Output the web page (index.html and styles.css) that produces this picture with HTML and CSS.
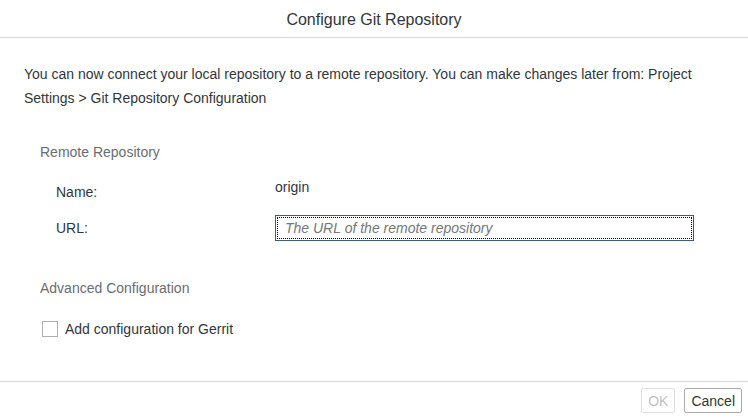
FILE: index.html
```html
<!DOCTYPE html>
<html>
<head>
<meta charset="utf-8">
<link rel="stylesheet" href="styles.css">
</head>
<body>
<div class="dialog">
  <header class="dlg-header">Configure Git Repository</header>
  <main class="dlg-content">
    <p class="intro">You can now connect your local repository to a remote repository. You can make changes later from: Project Settings &gt; Git Repository Configuration</p>
    <section class="group">
      <h2 class="group-title">Remote Repository</h2>
      <div class="form-row">
        <span class="label">Name:</span>
        <span class="value">origin</span>
      </div>
      <div class="form-row">
        <span class="label">URL:</span>
        <div class="input"><span class="placeholder">The URL of the remote repository</span></div>
      </div>
    </section>
    <section class="group adv">
      <h2 class="group-title">Advanced Configuration</h2>
      <label class="check-row"><span class="checkbox"></span><span>Add configuration for Gerrit</span></label>
    </section>
  </main>
  <footer class="dlg-footer">
    <button class="btn disabled">OK</button>
    <button class="btn">Cancel</button>
  </footer>
</div>
</body>
</html>
```
FILE: styles.css
```css
html, body { margin: 0; padding: 0; background: #fff; }
body { font-family: "Liberation Sans", Arial, sans-serif; color: #32363a; font-size: 14px; }
.dialog { width: 748px; height: 417px; display: flex; flex-direction: column; box-sizing: border-box; }
.dlg-header { height: 38px; padding-top: 2px; box-sizing: border-box; border-bottom: 1px solid #d9d9d9; display: flex; align-items: center; justify-content: center; font-size: 16px; color: #32363a; }
.dlg-content { flex: 1; padding: 0 24px; }
.intro { margin: 24px 0 0; line-height: 24px; }
.group { padding-left: 16px; }
.group-title { margin: 32px 0 0; font-size: 14px; font-weight: normal; color: #6a6d70; line-height: 20px; }
.form-row { display: flex; align-items: center; height: 36px; }
.form-row:first-of-type { margin-top: 12px; }
.label { width: 219px; padding-left: 16px; }
.value { margin-top: -10px; }
.input { width: 419px; height: 26px; box-sizing: border-box; border: 1px solid #3f5e7e; padding: 1px; }
.input .placeholder { display: flex; align-items: center; height: 100%; box-sizing: border-box; outline: 1px dotted #000; outline-offset: -1px; padding-left: 8px; font-style: italic; color: #74777a; }
.adv .group-title { margin-top: 32px; }
.check-row { display: flex; align-items: center; margin-top: 23px; margin-left: 2px; }
.checkbox { border: 1px solid #b0b0b0; margin-right: 7px; box-sizing: border-box; width: 16px; height: 16px; }
.dlg-footer { height: 36px; box-sizing: border-box; border-top: 1px solid #d9d9d9; display: flex; justify-content: flex-end; align-items: flex-end; gap: 9px; padding: 0 6px 4px 0; }
.btn { font-family: inherit; font-size: 14px; height: 25px; background: #fff; border: 1px solid #ababab; border-radius: 2px; color: #32363a; padding: 0 6px; }
.btn.disabled { color: #bfbfbf; border-color: #e0e0e0; }
```
